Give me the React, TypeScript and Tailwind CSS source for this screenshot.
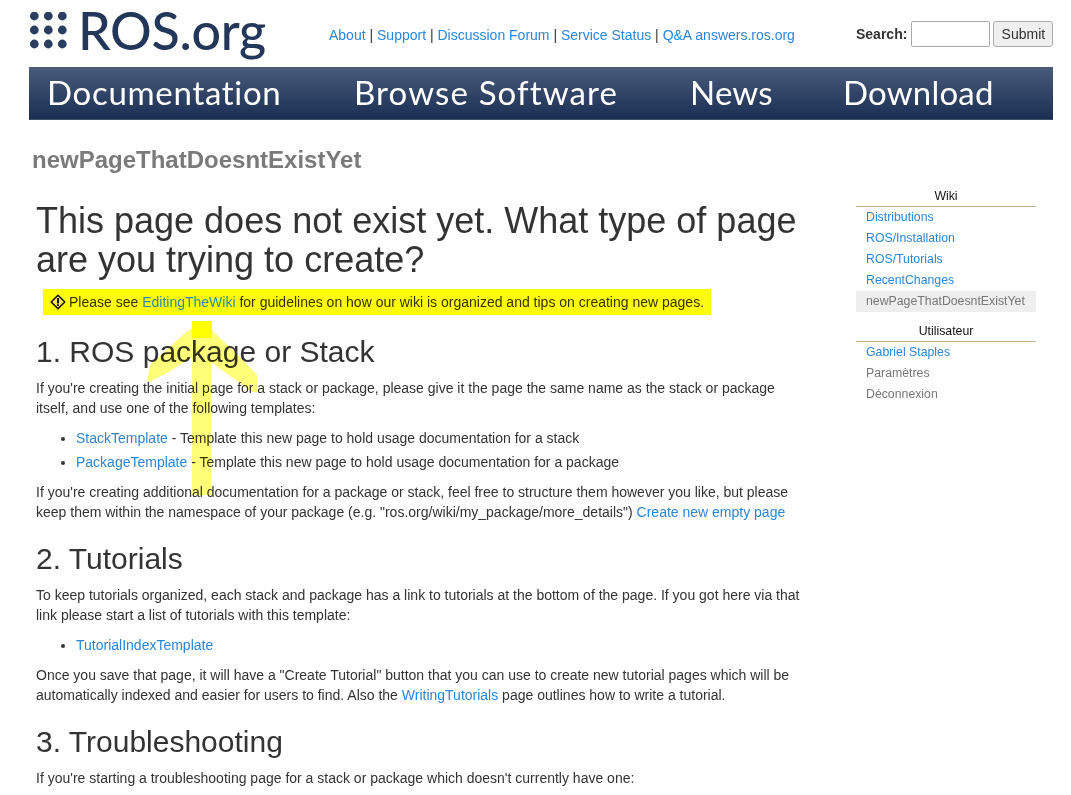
export default function App() {
  const link = "text-[#2a86d8]";
  return (
    <div className="relative h-[795px] w-[1071px] overflow-hidden bg-white font-['Liberation_Sans',Arial,sans-serif] text-[14px] leading-[20px] text-[#333]">
      <header className="flex h-[67px] items-start pl-[29px]">
        <div className="flex h-[60px] w-[300px] items-start gap-[10px] pt-[12px]">
          <svg width="39" height="37" viewBox="0 0 39 37" className="shrink-0" fill="#2a3e60">
            {[0, 1, 2].flatMap((r) => [0, 1, 2].map((c) => <circle key={`${r}${c}`} cx={5.3 + c * 14} cy={4 + r * 14} r="4.4" />))}
          </svg>
          <div className="mt-[-12px] font-['Lato',sans-serif] text-[52px] font-medium leading-[60px] tracking-[-0.3px] text-[#22375a]">ROS.org</div>
        </div>
        <nav className="mt-[25px] w-[527px] text-[#333]">
          <a className={link}>About</a> | <a className={link}>Support</a> | <a className={link}>Discussion Forum</a> | <a className={link}>Service Status</a> | <a className={link}>Q&amp;A answers.ros.org</a>
        </nav>
        <form className="mt-[21px] flex items-center gap-[3px]">
          <b className="mr-[1px] text-[#333]">Search:</b>
          <input className="h-[26px] w-[79px] rounded-[2px] border border-[#aaa] bg-white" />
          <button type="button" className="h-[26px] w-[60px] rounded-[3px] border border-[#aaa] bg-[#efefef] text-[14px] text-[#333]">Submit</button>
        </form>
      </header>
      <div className="ml-[29px] flex h-[53px] w-[1024px] items-center border-b border-[#3d5068] bg-gradient-to-b from-[#4a5c7a] to-[#1b2f55] pb-[2px] pl-[18px] font-['Lato',sans-serif] text-[33px] text-white">
        <span className="w-[307px] tracking-[0.7px]">Documentation</span>
        <span className="w-[336px] tracking-[1.13px]">Browse Software</span>
        <span className="w-[153px] tracking-[0.2px]">News</span>
        <span className="tracking-[0.2px]">Download</span>
      </div>
      <h1 className="ml-[32px] mt-[25px] text-[24px] font-bold leading-[30px] text-[#7a7a7a]">newPageThatDoesntExistYet</h1>
      <div className="flex">
        <main className="ml-[36px] mt-[26px] w-[770px]">
          <h2 className="text-[36px] leading-[39px] text-[#333]">This page does not exist yet. What type of page are you trying to create?</h2>
          <div className="ml-[7px] mt-[10px] flex h-[26px] w-[668px] items-center gap-[3px] bg-[#ffff00] pl-[7px] text-[#333300]">
            <svg width="16" height="16" viewBox="0 0 16 16"><path d="M8 1.2 14.8 8 8 14.8 1.2 8z" fill="#ffe45c" stroke="#111" strokeWidth="1.5" strokeLinejoin="round" /><rect x="7" y="4" width="2" height="5.5" fill="#111" /><rect x="7" y="10.3" width="2" height="1.8" fill="#111" /></svg>
            <span>Please see <a className="text-[#2a88b4]">EditingTheWiki</a> for guidelines on how our wiki is organized and tips on creating new pages.</span>
          </div>
          <h3 className="mt-[19px] text-[30px] leading-[36px]">1. ROS package or Stack</h3>
          <p className="mt-[8px]">If you're creating the initial page for a stack or package, please give it the page the same name as the stack or package itself, and use one of the following templates:</p>
          <ul className="ml-[40px] mt-[10px] list-disc">
            <li className="mb-[4px]"><a className={link}>StackTemplate</a> - Template this new page to hold usage documentation for a stack</li>
            <li><a className={link}>PackageTemplate</a> - Template this new page to hold usage documentation for a package</li>
          </ul>
          <p className="mt-[10px]">If you're creating additional documentation for a package or stack, feel free to structure them however you like, but please keep them within the namespace of your package (e.g. "ros.org/wiki/my_package/more_details") <a className={link}>Create new empty page</a></p>
          <h3 className="mt-[19px] text-[30px] leading-[36px]">2. Tutorials</h3>
          <p className="mt-[8px]">To keep tutorials organized, each stack and package has a link to tutorials at the bottom of the page. If you got here via that link please start a list of tutorials with this template:</p>
          <ul className="ml-[40px] mt-[10px] list-disc">
            <li><a className={link}>TutorialIndexTemplate</a></li>
          </ul>
          <p className="mt-[10px]">Once you save that page, it will have a "Create Tutorial" button that you can use to create new tutorial pages which will be automatically indexed and easier for users to find. Also the <a className={link}>WritingTutorials</a> page outlines how to write a tutorial.</p>
          <h3 className="mt-[19px] text-[30px] leading-[36px]">3. Troubleshooting</h3>
          <p className="mt-[8px]">If you're starting a troubleshooting page for a stack or package which doesn't currently have one:</p>
        </main>
        <aside className="ml-[50px] mt-[11px] w-[180px] text-[12.3px] leading-[21px]">
          <div className="border-b border-[#c4b08c] text-center leading-[20px] text-[#111]">Wiki</div>
          <a className={`block pl-[10px] ${link}`}>Distributions</a>
          <a className={`block pl-[10px] ${link}`}>ROS/Installation</a>
          <a className={`block pl-[10px] ${link}`}>ROS/Tutorials</a>
          <a className={`block pl-[10px] ${link}`}>RecentChanges</a>
          <div className="bg-[#eee] pl-[10px] text-[#777]">newPageThatDoesntExistYet</div>
          <div className="mt-[10px] border-b border-[#c4b08c] text-center leading-[19px] text-[#111]">Utilisateur</div>
          <a className={`block pl-[10px] ${link}`}>Gabriel Staples</a>
          <div className="pl-[10px] text-[#777]">Paramètres</div>
          <div className="pl-[10px] text-[#777]">Déconnexion</div>
        </aside>
      </div>
      <svg className="pointer-events-none absolute left-[140px] top-[315px] mix-blend-multiply" width="130" height="185" viewBox="0 0 130 185">
        <path d="M52 6H72V15L80 23 100 42 117 60 118 77 112 77 71 47V180H52V42L27 58 7 68 10 50 43 20 52 13Z" fill="#ffff7a" />
        <path d="M52 6H72V23H52Z" fill="#ffff00" />
      </svg>
    </div>
  );
}
